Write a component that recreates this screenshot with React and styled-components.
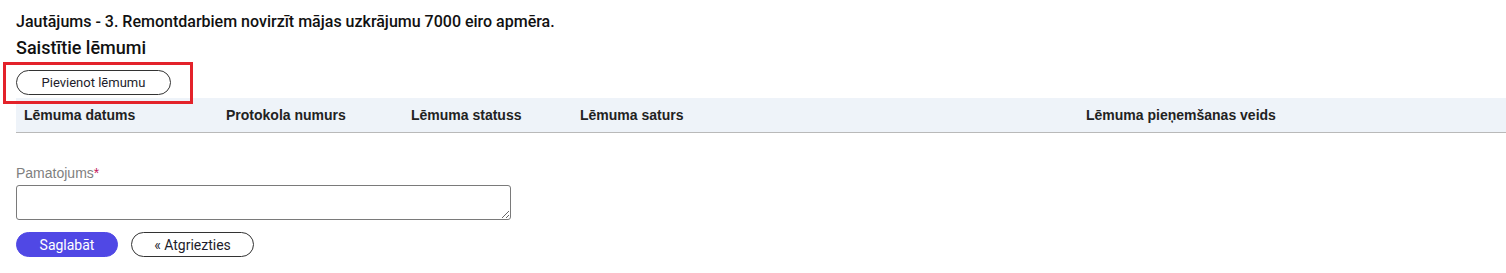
import React from "react";
import styled, { createGlobalStyle } from "styled-components";

const GlobalStyle = createGlobalStyle`
  body {
    margin: 0;
    background: #ffffff;
    font-family: Roboto, "Liberation Sans", sans-serif;
    color: #1a1a1a;
  }
`;

const Page = styled.div`
  padding: 11px 0 0 16px;
`;

const Question = styled.div`
  font-size: 16px;
  font-weight: 500;
  line-height: 22px;
  color: #111;
`;

const SectionTitle = styled.h3`
  margin: 3px 0 0;
  font-size: 18px;
  font-weight: 500;
  line-height: 24px;
  color: #111;
`;

const Highlight = styled.div`
  position: relative;
  display: inline-block;
  margin-top: 10px;
  vertical-align: top;
  &::after {
    content: "";
    position: absolute;
    left: -13px;
    top: -8px;
    width: 184px;
    height: 36px;
    border: 3px solid #e3222a;
    pointer-events: none;
    z-index: 2;
  }
`;

const PillButton = styled.button`
  display: inline-flex;
  align-items: center;
  justify-content: center;
  box-sizing: border-box;
  vertical-align: top;
  height: ${(p) => p.$h || 25}px;
  width: ${(p) => p.$w}px;
  border-radius: 999px;
  font-family: Roboto, "Liberation Sans", sans-serif;
  font-size: ${(p) => p.$size || 13}px;
  padding: 0;
  cursor: pointer;
  border: 1px solid ${(p) => (p.$primary ? "#5048e5" : "#333")};
  background: ${(p) => (p.$primary ? "#5048e5" : "#fff")};
  color: ${(p) => (p.$primary ? "#fff" : "#1d1d2b")};
`;

const Table = styled.div`
  margin-top: 3px;
  display: grid;
  grid-template-columns: 202px 185px 169px 506px 1fr;
  align-items: center;
  height: 34px;
  padding-left: 8px;
  background: #eef3f9;
  border-bottom: 1px solid #b9b9b9;
`;

const HeadCell = styled.div`
  font-family: "Liberation Sans", Arial, sans-serif;
  font-weight: 700;
  font-size: 14px;
  color: #222;
`;

const Label = styled.label`
  display: block;
  margin-top: 32px;
  font-family: "Liberation Sans", Arial, sans-serif;
  font-size: 14px;
  line-height: 16px;
  color: #808080;
  span {
    color: #c2185b;
  }
`;

const TextArea = styled.textarea`
  display: block;
  box-sizing: border-box;
  margin-top: 4px;
  width: 495px;
  height: 35px;
  border: 1px solid #7a7a7a;
  border-radius: 3px;
  font-family: "Liberation Sans", Arial, sans-serif;
`;

const Actions = styled.div`
  display: flex;
  gap: 13px;
  margin-top: 12px;
`;

export default function App() {
  const columns = [
    "Lēmuma datums",
    "Protokola numurs",
    "Lēmuma statuss",
    "Lēmuma saturs",
    "Lēmuma pieņemšanas veids",
  ];
  return (
    <Page>
      <GlobalStyle />
      <Question>
        Jautājums - 3. Remontdarbiem novirzīt mājas uzkrājumu 7000 eiro apmēra.
      </Question>
      <SectionTitle>Saistītie lēmumi</SectionTitle>
      <Highlight>
        <PillButton $w={155}>Pievienot lēmumu</PillButton>
      </Highlight>
      <Table>
        {columns.map((c) => (
          <HeadCell key={c}>{c}</HeadCell>
        ))}
      </Table>
      <Label>
        Pamatojums<span>*</span>
      </Label>
      <TextArea />
      <Actions>
        <PillButton $primary $w={102} $size={14}>
          Saglabāt
        </PillButton>
        <PillButton $w={123} $size={14}>
          « Atgriezties
        </PillButton>
      </Actions>
    </Page>
  );
}
